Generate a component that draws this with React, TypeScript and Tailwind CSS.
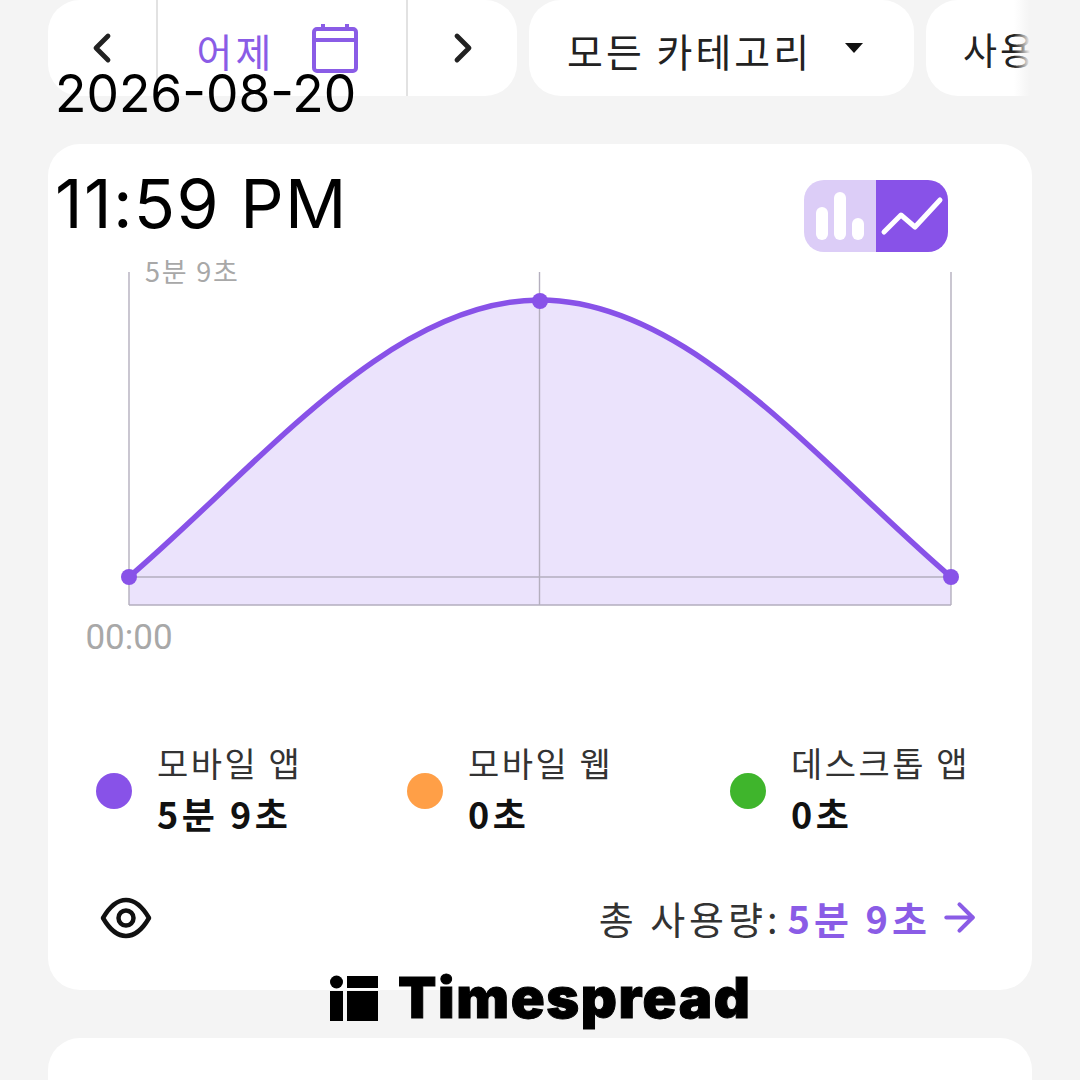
import { ArrowRight, ChevronLeft, ChevronRight } from 'lucide-react'

const kr = "font-['Noto_Sans_CJK_KR','Noto_Sans',sans-serif]"

const legend = [
  { label: '모바일 앱', value: '5분 9초', dot: 'bg-[#8852e8]', width: 'w-[311px]' },
  { label: '모바일 웹', value: '0초', dot: 'bg-[#ff9f47]', width: 'w-[323px]' },
  { label: '데스크톱 앱', value: '0초', dot: 'bg-[#3fb52c]', width: 'w-[240px]' },
]

function CalendarIcon() {
  return (
    <svg width="46" height="50" viewBox="0 0 46 50" fill="none" stroke="#8a5ce6" strokeWidth="4">
      <rect x="2" y="6" width="42" height="42" rx="3" />
      <path d="M2 17h42M11 1v6M35 1v6" />
    </svg>
  )
}

function BarsIcon() {
  return (
    <svg width="72" height="72" viewBox="0 0 72 72" fill="white">
      <rect x="12" y="27" width="12" height="33" rx="6" />
      <rect x="30" y="12" width="12" height="48" rx="6" />
      <rect x="48" y="38" width="12" height="22" rx="6" />
    </svg>
  )
}

function TrendIcon() {
  return (
    <svg width="72" height="72" viewBox="0 0 72 72" fill="none" stroke="white" strokeWidth="5" strokeLinecap="round" strokeLinejoin="round">
      <path d="M8 52 L25 35 L39 47 L64 20" />
    </svg>
  )
}

function EyeIcon() {
  return (
    <svg width="52" height="42" viewBox="0 0 52 42" fill="none" stroke="#111" strokeWidth="4.5">
      <path d="M3 21 C10 9 17 3 26 3 C35 3 42 9 49 21 C42 33 35 39 26 39 C17 39 10 33 3 21 Z" strokeLinejoin="round" />
      <circle cx="26" cy="21" r="7.5" />
    </svg>
  )
}

function UsageChart() {
  const curve = 'M129 319 C260 207 390 42 540 42 C690 42 820 207 951 319'
  return (
    <svg width="984" height="410" viewBox="0 0 1032 410" className="block w-[1032px] max-w-none -ml-12 overflow-visible" fill="none">
      <path d={`${curve} L951 347 L129 347 Z`} fill="#ebe3fc" />
      <path d="M129 14V347M539.5 14V347M951 14V347M129 319H951M129 347H951" stroke="#b4afbe" strokeWidth="1.4" />
      <path d={curve} stroke="#8852e8" strokeWidth="5.5" />
      <circle cx="129" cy="319" r="8" fill="#8852e8" />
      <circle cx="540" cy="43" r="8" fill="#8852e8" />
      <circle cx="951" cy="319" r="8" fill="#8852e8" />
      <text x="145" y="24" fontSize="27" letterSpacing="1.8" fill="#a8a8a8" fontFamily="Noto Sans CJK KR, sans-serif">5분 9초</text>
      <text x="129" y="391" textAnchor="middle" fontSize="35" fill="#a8a8a8" fontFamily="Roboto, sans-serif">00:00</text>
    </svg>
  )
}

export default function App() {
  return (
    <div className={`relative h-[1080px] w-[1080px] overflow-hidden bg-[#f4f4f4] ${kr}`}>
      <div className="relative flex h-24 w-[1030px] gap-3 overflow-hidden pl-12">
        <div className="flex w-[469px] shrink-0 rounded-[32px] bg-white">
          <div className="flex w-[110px] items-center justify-center border-r-2 border-[#e2e2e2]">
            <ChevronLeft size={48} strokeWidth={2.4} color="#222" />
          </div>
          <div className="flex w-[250px] items-center justify-center gap-[38px] border-r-2 border-[#e2e2e2] pr-[9px]">
            <span className="pt-1 text-[39px] tracking-[3px] text-[#8a5ce6]">어제</span>
            <CalendarIcon />
          </div>
          <div className="flex flex-1 items-center justify-center">
            <ChevronRight size={48} strokeWidth={2.4} color="#222" />
          </div>
        </div>
        <div className="flex w-[385px] shrink-0 items-center rounded-[32px] bg-white pl-[38px]">
          <span className="pt-1 text-[39px] tracking-[3px] text-[#222]">모든 카테고리</span>
          <svg width="18" height="11" viewBox="0 0 18 11" className="ml-[33px]" fill="#111">
            <path d="M0 0H18L9 10Z" />
          </svg>
        </div>
        <div className="flex w-[140px] shrink-0 items-center rounded-[32px] bg-white pl-[37px]">
          <span className="whitespace-nowrap pt-1 text-[37px] tracking-[3px] text-[#222]">사용량</span>
        </div>
        <div className="absolute inset-y-0 right-0 w-4 bg-gradient-to-r from-transparent to-[#f4f4f4]" />
      </div>

      <div className="mx-12 mt-12 h-[846px] w-[984px] rounded-[32px] bg-white pt-9">
        <div className="flex justify-end pr-[84px]">
          <div className="flex h-[72px] w-[144px] overflow-hidden rounded-[20px]">
            <div className="w-[72px] bg-[#dccdf7]">
              <BarsIcon />
            </div>
            <div className="w-[72px] bg-[#8852e8]">
              <TrendIcon />
            </div>
          </div>
        </div>
        <div className="mt-[6px]">
          <UsageChart />
        </div>
        <div className="mt-[69px] flex pl-12">
          {legend.map((item) => (
            <div key={item.label} className={`flex items-center ${item.width}`}>
              <div className={`mt-[6px] h-9 w-9 shrink-0 rounded-full ${item.dot}`} />
              <div className="ml-[25px] whitespace-nowrap">
                <div className="text-[34px] leading-[51px] tracking-[2.5px] text-[#333]">{item.label}</div>
                <div className="text-[36px] font-bold leading-[51px] tracking-[3.5px] text-[#111]">{item.value}</div>
              </div>
            </div>
          ))}
        </div>
        <div className="mt-[53px] flex items-center justify-between pl-[52px] pr-[50px]">
          <EyeIcon />
          <div className="flex items-center whitespace-nowrap text-[38px] leading-[51px] tracking-[4px] text-[#333]">
            <span>총 사용량:</span>
            <span className="ml-[6px] font-bold text-[#8a5ce6]">5분 9초</span>
            <ArrowRight size={45} strokeWidth={2.2} color="#8a5ce6" className="ml-[6px]" />
          </div>
        </div>
      </div>

      <div className="mx-12 mt-12 h-24 w-[984px] rounded-[32px] bg-white" />

      <div className="absolute left-[55px] top-[61px] font-['Inter',sans-serif] text-[51.5px] leading-[64px] text-black">2026-08-20</div>
      <div className="absolute left-[55px] top-[163px] font-['Inter',sans-serif] text-[68px] leading-[80px] tracking-[1.3px] text-black">11:59 PM</div>
      <div className="absolute left-[330px] top-[968px] flex items-center gap-5">
        <svg width="48" height="46" viewBox="0 0 48 46" fill="black">
          <circle cx="6.5" cy="7" r="6.5" />
          <rect x="0" y="16" width="13" height="30" />
          <rect x="17" y="1" width="31" height="12" />
          <rect x="17" y="16" width="31" height="30" />
        </svg>
        <span className="font-['Inter',sans-serif] text-[56px] font-black leading-[60px] tracking-[1.6px] text-black [-webkit-text-stroke:1px_black]">Timespread</span>
      </div>
    </div>
  )
}
